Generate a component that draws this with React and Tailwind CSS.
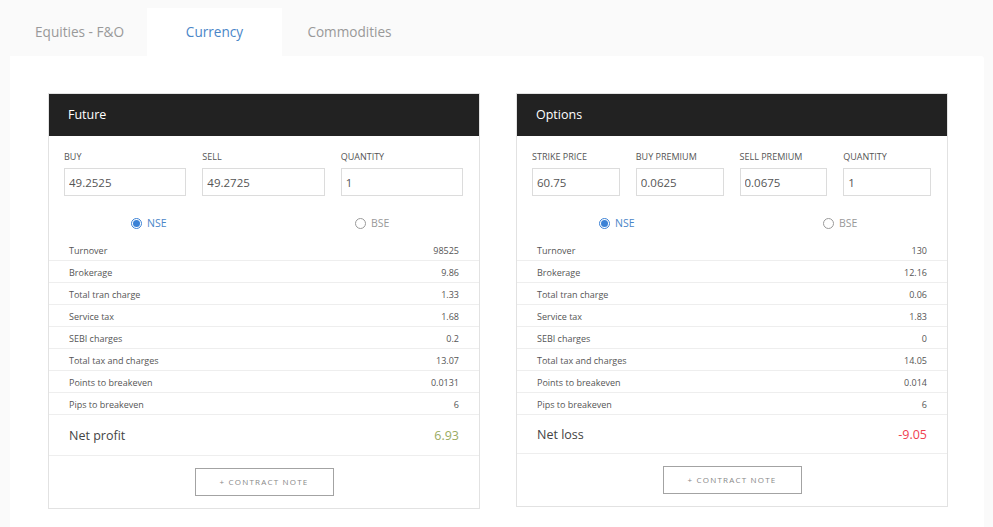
import { useState } from 'react'

const FONT = { fontFamily: '"Open Sans", "Noto Sans", Arial, sans-serif' }

const futureRows = [
  ['Turnover', '98525'],
  ['Brokerage', '9.86'],
  ['Total tran charge', '1.33'],
  ['Service tax', '1.68'],
  ['SEBI charges', '0.2'],
  ['Total tax and charges', '13.07'],
  ['Points to breakeven', '0.0131'],
  ['Pips to breakeven', '6'],
]

const optionRows = [
  ['Turnover', '130'],
  ['Brokerage', '12.16'],
  ['Total tran charge', '0.06'],
  ['Service tax', '1.83'],
  ['SEBI charges', '0'],
  ['Total tax and charges', '14.05'],
  ['Points to breakeven', '0.014'],
  ['Pips to breakeven', '6'],
]

function Radio({ label, checked, onClick }) {
  return (
    <button type="button" onClick={onClick} className="flex items-center gap-[5px]">
      <span
        className={
          'flex h-[11px] w-[11px] items-center justify-center rounded-full border ' +
          (checked ? 'border-[#3b82d6]' : 'border-[#9a9a9a]')
        }
      >
        {checked && <span className="h-[7px] w-[7px] rounded-full bg-[#3b82d6]" />}
      </span>
      <span className={'text-[10.5px] leading-[11px] ' + (checked ? 'text-[#4a86c8]' : 'text-[#999]')}>{label}</span>
    </button>
  )
}

function Panel({ title, fields, cols, rows, netLabel, netValue, netColor, netHeight }) {
  const [exchange, setExchange] = useState('NSE')
  return (
    <div className="w-[432px] shrink-0 border border-[#e2e2e2] bg-white">
      <div className="flex h-[42px] items-center bg-[#222222] px-[19px] text-[12.5px] text-white">
        {title}
      </div>
      <div className={'grid gap-x-[16px] pl-[15px] pr-[16px] pt-[14px] ' + cols}>
        {fields.map(([label, value]) => (
          <div key={label}>
            <div className="mb-[4px] text-[9px] leading-[14px] text-[#555]">{label}</div>
            <input
              defaultValue={value}
              className="h-[28px] w-full border border-[#dcdcdc] pl-[4px] text-[11.5px] text-[#555] outline-none"
            />
          </div>
        ))}
      </div>
      <div className="flex h-[43px] items-start pl-[82px] pt-[22px]">
        <div className="w-[224px]">
          <Radio label="NSE" checked={exchange === 'NSE'} onClick={() => setExchange('NSE')} />
        </div>
        <Radio label="BSE" checked={exchange === 'BSE'} onClick={() => setExchange('BSE')} />
      </div>
      <div>
        {rows.map(([label, value]) => (
          <div
            key={label}
            className="flex h-[22px] items-center justify-between border-b border-[#eeeeee] px-[20px] pt-[2px] text-[9px] text-[#555]"
          >
            <span>{label}</span>
            <span>{value}</span>
          </div>
        ))}
      </div>
      <div
        className={
          'flex items-center justify-between border-b border-[#eeeeee] px-[20px] pt-[2px] text-[12.5px] ' + netHeight
        }
      >
        <span className="text-[#444]">{netLabel}</span>
        <span className={netColor}>{netValue}</span>
      </div>
      <div className="flex justify-center pb-[12px] pt-[12px]">
        <button
          type="button"
          className="h-[28px] w-[139px] border border-[#a3a3a3] text-[8px] tracking-[1.2px] text-[#888]"
        >
          + CONTRACT NOTE
        </button>
      </div>
    </div>
  )
}

export default function App() {
  const [tab, setTab] = useState('Currency')
  const tabs = ['Equities - F&O', 'Currency', 'Commodities']

  return (
    <div className="min-h-screen bg-[#fafafa]" style={FONT}>
      <div className="flex pl-[12px] pt-[8px]">
        {tabs.map((t) => (
          <button
            key={t}
            type="button"
            onClick={() => setTab(t)}
            className={
              'h-[48px] w-[135px] text-[13.6px] ' +
              (tab === t ? 'bg-white text-[#4a86c8]' : 'text-[#999]')
            }
          >
            {t}
          </button>
        ))}
      </div>
      <div className="mx-[10px] flex min-h-[471px] w-[974px] items-start gap-[36px] rounded-tr-[3px] bg-white pl-[38px] pr-[36px] pt-[37px]">
        <Panel
          title="Future"
          cols="grid-cols-3"
          fields={[
            ['BUY', '49.2525'],
            ['SELL', '49.2725'],
            ['QUANTITY', '1'],
          ]}
          rows={futureRows}
          netLabel="Net profit"
          netValue="6.93"
          netColor="text-[#9aab62]"
          netHeight="h-[41px]"
        />
        <Panel
          title="Options"
          cols="grid-cols-4"
          fields={[
            ['STRIKE PRICE', '60.75'],
            ['BUY PREMIUM', '0.0625'],
            ['SELL PREMIUM', '0.0675'],
            ['QUANTITY', '1'],
          ]}
          rows={optionRows}
          netLabel="Net loss"
          netValue="-9.05"
          netColor="text-[#f0404f]"
          netHeight="h-[39px]"
        />
      </div>
    </div>
  )
}
